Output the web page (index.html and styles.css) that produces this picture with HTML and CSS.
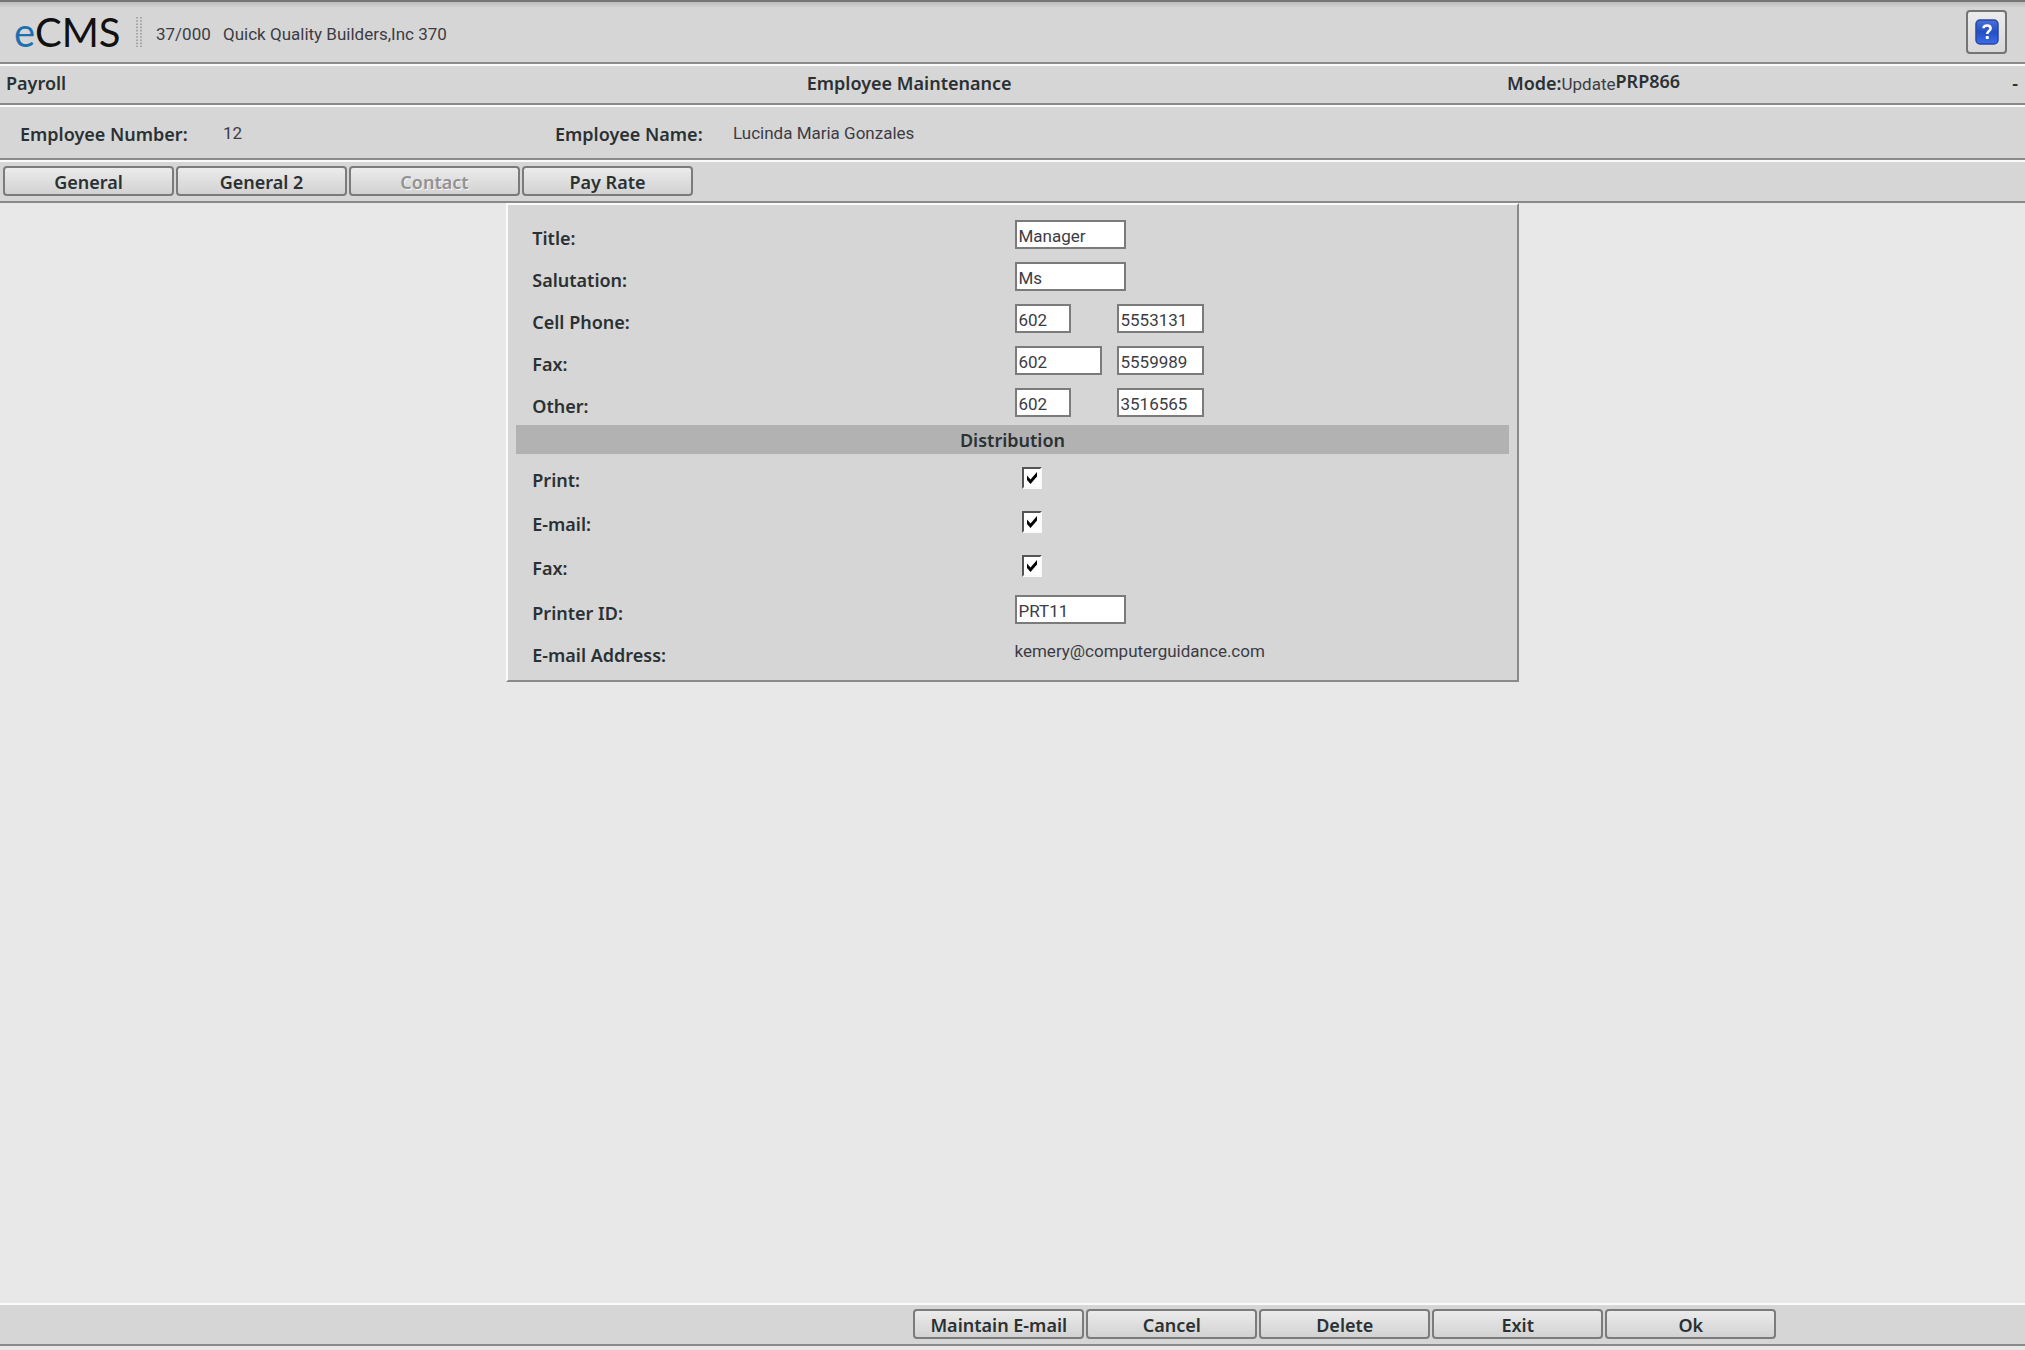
FILE: index.html
```html
<!DOCTYPE html>
<html lang="en">
<head>
<meta charset="utf-8">
<title>eCMS - Employee Maintenance</title>
<link rel="stylesheet" href="styles.css">
</head>
<body>
<header class="bar brand">
  <div class="logo"><span class="logo-e">e</span>CMS</div>
  <svg class="grip" width="6" height="30" viewBox="0 0 6 30" aria-hidden="true">
    <path d="M1 0V30M5 0V30" stroke="#9a9a9a" stroke-width="1.6" stroke-dasharray="1.6 1.6"/>
  </svg>
  <div class="company"><span class="company-code">37/000</span><span>Quick Quality Builders,Inc 370</span></div>
  <button class="help" type="button" aria-label="Help">
    <svg width="24" height="26" viewBox="0 0 24 26" aria-hidden="true">
      <defs>
        <linearGradient id="blue" x1="0" y1="0" x2="0" y2="1">
          <stop offset="0" stop-color="#4a6fd8"/>
          <stop offset=".5" stop-color="#2450c4"/>
          <stop offset="1" stop-color="#3c6cec"/>
        </linearGradient>
      </defs>
      <rect x="1" y="1" width="22" height="24" rx="4" fill="url(#blue)" stroke="#2b47a0" stroke-width="1.5"/>
      <path d="M8.5 9.2C8.7 5.6 15.6 5.6 15.6 9.4C15.6 12 12.2 12 12.2 15" fill="none" stroke="#fff" stroke-width="2.6"/>
      <rect x="10.8" y="17" width="2.9" height="3" fill="#fff"/>
    </svg>
  </button>
</header>

<div class="bar title-bar">
  <strong>Payroll</strong>
  <h1>Employee Maintenance</h1>
  <div class="mode"><span class="mode-text"><strong>Mode:</strong>Update</span><strong>PRP866</strong></div>
  <strong>-</strong>
</div>

<dl class="bar employee">
  <dt>Employee Number:</dt><dd>12</dd>
  <dt>Employee Name:</dt><dd>Lucinda Maria Gonzales</dd>
</dl>

<nav class="bar tabs">
  <button class="btn" type="button">General</button>
  <button class="btn" type="button">General 2</button>
  <button class="btn" type="button" disabled>Contact</button>
  <button class="btn" type="button">Pay Rate</button>
</nav>

<main>
  <form class="panel" id="contact">
    <div class="row"><label for="title">Title:</label><div class="field"><input class="text" id="title" value="Manager"></div></div>
    <div class="row"><label for="salutation">Salutation:</label><div class="field"><input class="text" id="salutation" value="Ms"></div></div>
    <div class="row"><label for="cell">Cell Phone:</label><div class="field phone"><input class="text area" id="cell" value="602"><input class="text number" aria-label="Cell phone number" value="5553131"></div></div>
    <div class="row"><label for="fax">Fax:</label><div class="field phone"><input class="text number" id="fax" value="602"><input class="text number" aria-label="Fax number" value="5559989"></div></div>
    <div class="row"><label for="other">Other:</label><div class="field phone"><input class="text area" id="other" value="602"><input class="text number" aria-label="Other number" value="3516565"></div></div>
    <h2>Distribution</h2>
    <div class="row check-row"><label for="by-print">Print:</label><div class="field"><input class="check" type="checkbox" id="by-print" checked></div></div>
    <div class="row check-row"><label for="by-email">E-mail:</label><div class="field"><input class="check" type="checkbox" id="by-email" checked></div></div>
    <div class="row check-row"><label for="by-fax">Fax:</label><div class="field"><input class="check" type="checkbox" id="by-fax" checked></div></div>
    <div class="row"><label for="printer">Printer ID:</label><div class="field"><input class="text" id="printer" value="PRT11"></div></div>
    <div class="row"><label for="email">E-mail Address:</label><div class="field"><output id="email">kemery@computerguidance.com</output></div></div>
  </form>
</main>

<footer class="actions">
  <button class="btn" type="button">Maintain E-mail</button>
  <button class="btn" type="button">Cancel</button>
  <button class="btn" type="button">Delete</button>
  <button class="btn" type="button">Exit</button>
  <button class="btn" type="submit" form="contact">Ok</button>
</footer>
</body>
</html>
```
FILE: styles.css
```css
* {
  box-sizing: border-box;
}

body {
  display: flex;
  flex-direction: column;
  min-height: 100vh;
  margin: 0;
  padding-bottom: 4px;
  border-top: 2px solid #767676;
  background: #e8e8e8;
  color: #3c3c44;
  font: 17px/24px Roboto, "Open Sans", sans-serif;
}

strong,
h1,
h2,
dt,
label,
.btn {
  margin: 0;
  color: #2b3133;
  font-family: "Noto Sans", "Open Sans", sans-serif;
  font-size: 18px;
  font-weight: 600;
  line-height: 24px;
}

.bar {
  display: flex;
  align-items: center;
  margin: 0;
  border-top: 2px solid #fafafa;
  border-bottom: 2px solid #8a8a8a;
  background: #d6d6d6;
}

.brand {
  height: 62px;
  padding: 0 18px 0 14px;
  border-top: 0;
  background: linear-gradient(#bcbcbc, #d6d6d6 6px);
}

.logo {
  width: 122px;
  color: #111;
  font: 40px/48px Lato, sans-serif;
}

.logo-e {
  color: #1d70b0;
}

.company {
  display: flex;
  padding: 4px 0 0 14px;
}

.company-code {
  width: 67px;
}

.help {
  display: grid;
  place-items: center;
  width: 41px;
  height: 44px;
  margin-left: auto;
  padding: 0;
  border: 2px solid #747474;
  border-radius: 4px;
  background: linear-gradient(#ececec, #d8d8d8);
}

.title-bar {
  display: grid;
  grid-template-columns: 39.8% 34.8% 1fr auto;
  height: 41px;
  padding: 0 7px 4px 6px;
}

.mode {
  display: flex;
}

.mode-text {
  padding-top: 2px;
}

.employee {
  display: grid;
  grid-template-columns: 203px 332px 178px 1fr;
  height: 55px;
  padding: 0 20px;
}

.employee dt {
  padding-top: 2px;
}

.employee dd {
  margin: 0;
}

.tabs {
  gap: 2px;
  height: 43px;
  padding: 0 3px 2px;
}

.btn {
  width: 171px;
  height: 30px;
  padding: 2px 0 0;
  border: 2px solid #7b7b7b;
  border-radius: 4px;
  background: linear-gradient(#ebebeb, #d2d2d2);
}

.btn:disabled {
  color: #929292;
  text-shadow: 1px 1px #f6f6f6;
}

main {
  flex: 1;
}

.panel {
  width: 50%;
  margin: 0 auto;
  padding: 8px;
  border: 2px solid #fafafa;
  border-right-color: #8a8a8a;
  border-bottom-color: #8a8a8a;
  background: #d6d6d6;
}

.row {
  display: grid;
  grid-template-columns: 1fr 1fr;
  align-items: center;
  height: 42px;
}

.check-row {
  height: 44px;
}

.row label {
  padding: 8px 0 0 16px;
}

.check-row label {
  padding-top: 4px;
}

.field {
  display: flex;
  padding-left: 2px;
}

.phone {
  display: grid;
  grid-template-columns: 102px 1fr;
}

.text {
  width: 111px;
  height: 29px;
  padding: 4px 2px 0;
  border: 2px solid #7b7b7b;
  background: #fff;
  color: #3c3c44;
  font: inherit;
  line-height: 22px;
}

.area {
  width: 56px;
}

.number {
  width: 87px;
}

h2 {
  height: 29px;
  margin: 2px 0;
  background: #b2b2b2;
  line-height: 30px;
  text-align: center;
}

.check {
  appearance: none;
  width: 20px;
  height: 22px;
  margin: 0 0 0 7px;
  border: 2px solid #fafafa;
  border-top-color: #555;
  border-left-color: #555;
  background: #fff;
}

.check:checked {
  background: #fff url("data:image/svg+xml,%3Csvg xmlns='http://www.w3.org/2000/svg' viewBox='0 0 16 18'%3E%3Cpath d='M3 6.5L6.5 10.5L13 3V7.5L6.5 15L3 11Z' fill='%23000'/%3E%3C/svg%3E") center / 16px 18px no-repeat;
}

.actions {
  display: flex;
  align-items: center;
  gap: 2px;
  height: 43px;
  padding: 0 0 2px 45.1%;
  border-top: 2px solid #fafafa;
  border-bottom: 2px solid #8a8a8a;
  background: #d6d6d6;
}
```
